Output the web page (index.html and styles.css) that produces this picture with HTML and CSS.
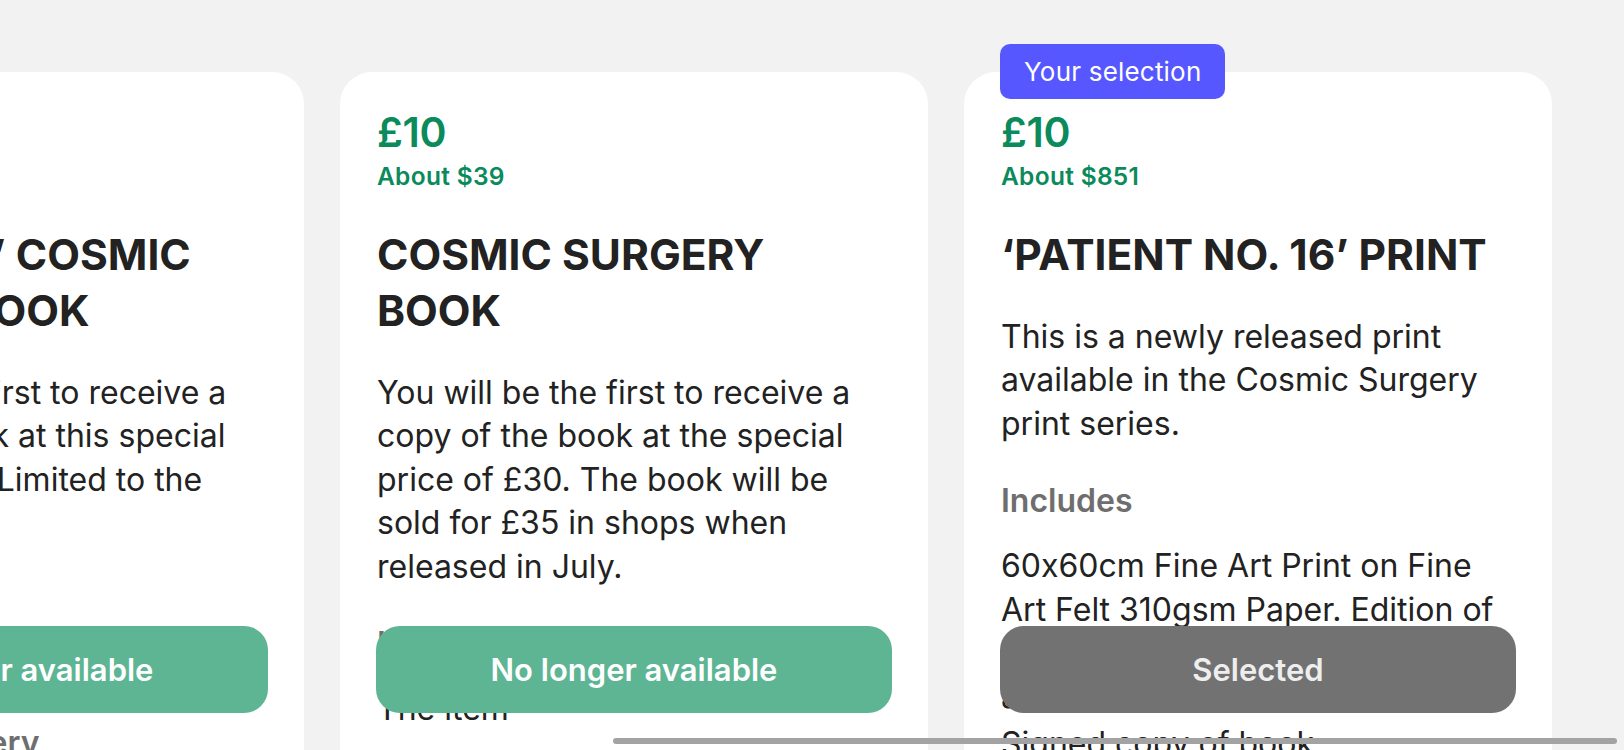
FILE: index.html
```html
<!DOCTYPE html>
<html lang="en">
<head>
<meta charset="utf-8">
<title>Rewards</title>
<link rel="stylesheet" href="styles.css">
</head>
<body>
<div class="viewport">
  <div class="track">
    <article class="card">
      <div class="price">£12</div>
      <div class="approx">About $16</div>
      <h2 class="title">‘PREORDER’ COSMIC SURGERY BOOK</h2>
      <p class="body">You will be the first to receive a copy of the book at this special price of £12.50. Limited to the earliest 50.</p>
      <h3 class="label">Includes</h3>
      <p class="item">Signed copy of book</p>
      <h3 class="label">Estimated delivery</h3>
      <p class="item">July 2019</p>
      <button class="cta cta-off" type="button">No longer available</button>
    </article>
    <article class="card">
      <div class="price">£10</div>
      <div class="approx">About $39</div>
      <h2 class="title">COSMIC SURGERY BOOK</h2>
      <p class="body">You will be the first to receive a copy of the book at the special price of £30. The book will be sold for £35 in shops when released in July.</p>
      <h3 class="label">Includes</h3>
      <p class="item">The item</p>
      <button class="cta cta-off" type="button">No longer available</button>
    </article>
    <article class="card">
      <span class="badge">Your selection</span>
      <div class="price">£10</div>
      <div class="approx">About $851</div>
      <h2 class="title">‘PATIENT NO. 16’ PRINT</h2>
      <p class="body">This is a newly released print available in the Cosmic Surgery print series.</p>
      <h3 class="label">Includes</h3>
      <p class="item">60x60cm Fine Art Print on Fine Art Felt 310gsm Paper. Edition of 50, signed and numbered by the artist.</p>
      <p class="item item-next">Signed copy of book</p>
      <button class="cta cta-selected" type="button">Selected</button>
    </article>
  </div>
  <div class="scrollbar"></div>
</div>
</body>
</html>
```
FILE: styles.css
```css
* { box-sizing: border-box; }
html, body {
  margin: 0;
  padding: 0;
  background: #f2f2f2;
  overflow: hidden;
}
body {
  font-family: Inter, "Noto Sans", "Liberation Sans", sans-serif;
  font-feature-settings: "calt" 0;
  color: #222222;
}
.viewport {
  position: relative;
  width: 1624px;
  height: 750px;
  overflow: hidden;
}
.track {
  display: flex;
  gap: 36px;
  margin-left: -284px;
  padding-top: 72px;
}
.card {
  position: relative;
  flex: 0 0 588px;
  height: 760px;
  background: #ffffff;
  border-radius: 32px;
  padding: 36px 37px 0 37px;
}
.price {
  font-size: 41px;
  line-height: 48px;
  font-weight: 600;
  color: #0b8a5b;
  letter-spacing: -0.3px;
}
.approx {
  margin-top: 5.1px;
  font-size: 24.5px;
  line-height: 30px;
  font-weight: 600;
  color: #0b8a5b;
  letter-spacing: 0.3px;
}
.title {
  margin: 36.4px 0 0 0;
  font-size: 42.5px;
  line-height: 56px;
  font-weight: 700;
  color: #222222;
  letter-spacing: 0;
}
.body {
  margin: 31.1px 0 0 0;
  font-size: 32px;
  line-height: 43.5px;
  font-weight: 400;
}
.label {
  margin: 34.2px 0 0 0;
  font-size: 32px;
  line-height: 43.5px;
  font-weight: 600;
  color: #6e6e6e;
}
.item {
  margin: 21.5px 0 0 0;
  font-size: 32px;
  line-height: 43.5px;
  font-weight: 400;
}
.item-next {
  margin-top: 4px;
}
.badge {
  position: absolute;
  top: -28px;
  left: 36px;
  height: 55px;
  padding: 0 24px;
  display: flex;
  align-items: center;
  background: #5757ff;
  color: #ffffff;
  border-radius: 10px;
  font-size: 26px;
  font-weight: 400;
  letter-spacing: 0.2px;
}
.cta {
  position: absolute;
  top: 554px;
  left: 36px;
  right: 36px;
  height: 87px;
  border: 0;
  border-radius: 24px;
  font-family: inherit;
  font-size: 31px;
  font-weight: 600;
  display: flex;
  align-items: center;
  justify-content: center;
  padding: 0;
}
.cta-off {
  background: #5db594;
  color: #ffffff;
}
.cta-selected {
  background: #727272;
  color: #eeeeee;
}
.scrollbar {
  position: absolute;
  left: 613px;
  top: 738px;
  width: 1004px;
  height: 5.5px;
  border-radius: 3px;
  background: #a3a3a3;
}
```
